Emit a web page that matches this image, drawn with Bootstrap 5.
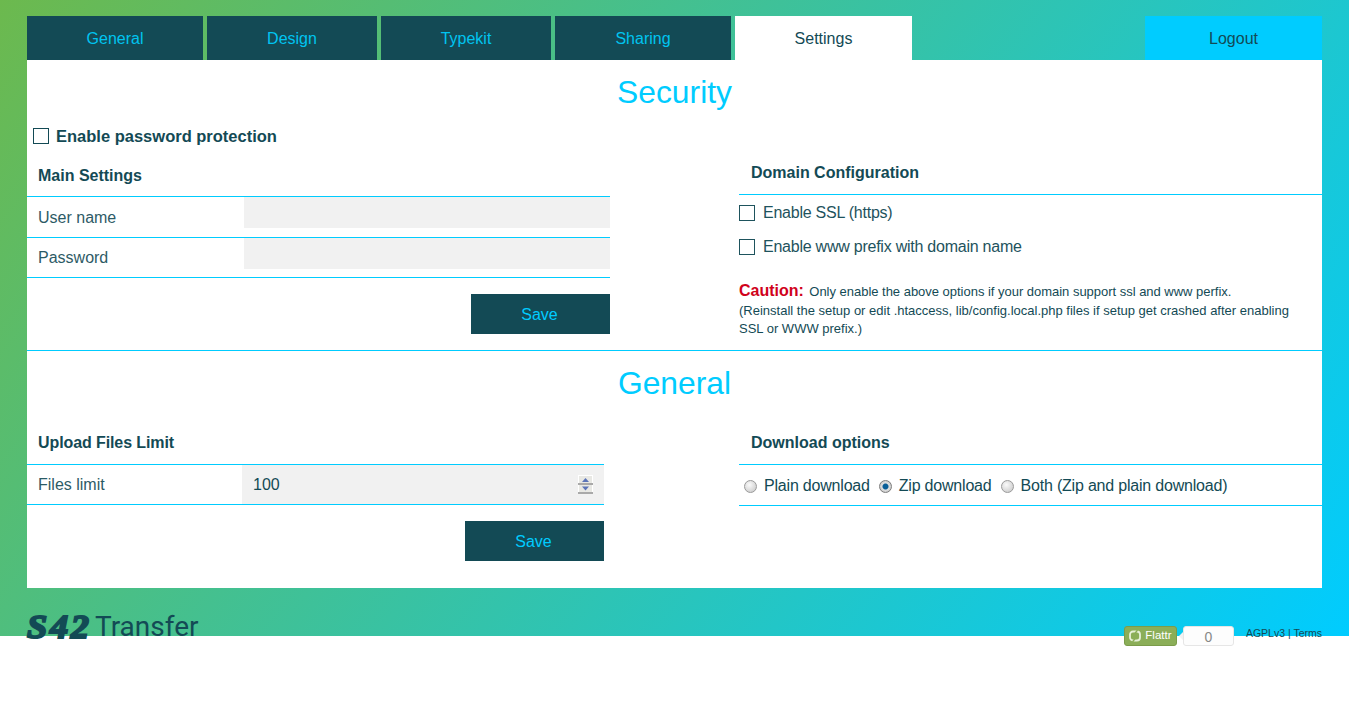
<!DOCTYPE html>
<html lang="en">
<head>
    <meta charset="UTF-8">
    <title>S42 Transfer - Settings</title>
    <meta name="viewport" content="width=device-width, initial-scale=1">
    <link href="https://cdn.jsdelivr.net/npm/bootstrap@5.3.3/dist/css/bootstrap.min.css" rel="stylesheet">
    <style>
        html, body { height: 705px; overflow: hidden; }
        body { font-family: "Liberation Sans", Arial, sans-serif; font-size: 16px; color: #134a55; background: #fff; }
        .bg-wrap { height: 636px; padding: 16px 27px 0; background: linear-gradient(128deg, #6cb94e 0%, #00ccff 100%); }

        /* tabs */
        .tab-bar { gap: 4px; height: 44px; }
        .tab-link { display: block; height: 44px; line-height: 45px; text-align: center; background: #134a55; color: #00c4f0; text-decoration: none; }
        .tab-link.active { background: #fff; color: #134a55; }
        .tab-link.logout { margin-left: auto; background: #00ccff; color: #134a55; }
        .w-176 { width: 176px; }
        .w-170 { width: 170px; }
        .w-177 { width: 177px; }

        .panel { height: 528px; background: #fff; }
        .sec-title { height: 64px; line-height: 64px; margin: 0; text-align: center; font-size: 31.8px; font-weight: 400; color: #00ccff; }
        .sec-security { height: 291px; border-bottom: 1px solid #00ccff; }
        .col-box { width: 583px; }
        .col-box.narrow { width: 577px; }

        .pw-toggle { height: 24px; padding-left: 6px; gap: 7px; font-size: 16.5px; font-weight: 700; }
        .box-head { font-size: 16px; line-height: 24px; font-weight: 700; padding-left: 11px; border-bottom: 1px solid #00ccff; }
        .head-main { height: 49px; padding-top: 16px; }
        .head-domain { height: 71px; padding-top: 37px; padding-left: 12px; }
        .head-upload { height: 50px; padding-top: 16px; letter-spacing: -.1px; }
        .head-download { height: 50px; padding-top: 16px; padding-left: 12px; }

        .set-row { height: 40px; border-bottom: 1px solid #00ccff; }
        .set-row.first-row { height: 41px; }
        .set-label { width: 217px; padding: 8px 0 0 11px; flex: none; opacity: .9; }
        .first-row .set-label { padding-top: 9px; }
        .set-input { flex: 1; height: 31px; border: 0; background: #f1f1f1; padding: 0; outline: 0; }
        .files-label { width: 215px; }
        .files-wrap { flex: 1; height: 39px; background: #f1f1f1; padding-left: 11px; position: relative; }
        .files-input { width: 300px; height: 39px; border: 0; background: transparent; padding: 0; color: #134a55; outline: 0; }
        .spin-icon { position: absolute; right: 11px; top: 10px; display: block; }

        .save-btn { width: 139px; height: 40px; border: 0; border-radius: 0; background: #134a55; color: #00ccff; font-size: 16px; padding: 2px 2px 0 0; }
        .save-btn:hover { background: #134a55; color: #00ccff; }

        .tick-box { appearance: none; width: 16px; height: 16px; border: 1px solid #134a55; background: #fff; margin: 0; flex: none; border-radius: 0; }
        .tick-list { margin-top: 1px; }
        .tick-row { height: 34px; gap: 8px; opacity: .95; letter-spacing: -.24px; }
        .caution-txt { font-size: 13px; line-height: 18px; margin-top: 18px; padding-right: 20px; }
        .caution-line { padding-bottom: 1px; letter-spacing: -.02px; }
        .caution-txt b { font-size: 16px; color: #d0021b; margin-right: 2px; }

        .dl-row { height: 41px; padding: 2px 0 0 5px; border-bottom: 1px solid #00ccff; letter-spacing: -.2px; }
        .dl-radio { appearance: none; width: 13px; height: 13px; margin: 0 7px 0 0; border-radius: 50%; border: 1px solid #9a9a9a; background: radial-gradient(circle at 40% 35%, #fafafa, #c4c4c4); flex: none; }
        .dl-radio:checked { background: radial-gradient(circle, #0a5f98 0 2.5px, #e0e0e0 3.5px, #b8b8b8 100%); border-color: #7d7d7d; }
        .dl-label { margin-right: 9px; }

        /* footer */
        .foot-bar { padding-top: 24px; height: 48px; }
        .logo-s42 { display: inline-block; width: 64px; transform: scaleX(1.1); transform-origin: left center; font-family: "Liberation Serif", serif; font-style: italic; font-weight: 700; font-size: 33px; line-height: 30px; letter-spacing: 2.5px; -webkit-text-stroke: 2px #134a55; color: #134a55; white-space: nowrap; }
        .logo-name { font-family: "Roboto", "Liberation Sans", sans-serif; font-weight: 400; font-size: 28px; line-height: 30px; margin-left: 4px; color: #134a55; }
        .flattr-btn { width: 53px; height: 20px; margin-top: 14px; background: #8bae58; border: 1px solid #7b9c4a; border-radius: 3px; color: #fff; font-size: 11.5px; gap: 4px; }
        .flattr-count { width: 51px; height: 20px; margin: 14px 0 0 6px; background: #fdfdfd; border: 1px solid #e6e6e6; border-radius: 3px; color: #888; font-size: 14px; line-height: 20px; text-align: center; position: relative; }
        .flattr-count::before { content: ""; position: absolute; left: -5px; top: 5px; border: 4px solid transparent; border-left: 0; border-right: 4px solid #f2f2f2; }
        .foot-links { margin: 14px 0 0 12px; font-size: 10.5px; line-height: 14px; }
    </style>
</head>
<body>

<div class="bg-wrap">
    <!-- Tabs -->
    <ul class="nav tab-bar">
        <li class="w-176"><a class="tab-link" href="#">General</a></li>
        <li class="w-170"><a class="tab-link" href="#">Design</a></li>
        <li class="w-170"><a class="tab-link" href="#">Typekit</a></li>
        <li class="w-176"><a class="tab-link" href="#">Sharing</a></li>
        <li class="w-177"><a class="tab-link active" href="#">Settings</a></li>
        <li class="w-177 ms-auto"><a class="tab-link logout" href="#">Logout</a></li>
    </ul>

    <div class="panel">
        <!-- Security -->
        <div class="sec-security">
            <h2 class="sec-title">Security</h2>
            <div class="d-flex justify-content-between">
                <div class="col-box">
                    <label class="pw-toggle d-flex align-items-center">
                        <input type="checkbox" class="tick-box">
                        <span>Enable password protection</span>
                    </label>
                    <div class="box-head head-main">Main Settings</div>
                    <div class="set-row first-row d-flex">
                        <span class="set-label">User name</span>
                        <input type="text" class="set-input">
                    </div>
                    <div class="set-row d-flex">
                        <span class="set-label">Password</span>
                        <input type="password" class="set-input">
                    </div>
                    <div class="d-flex justify-content-end mt-3">
                        <button class="btn save-btn">Save</button>
                    </div>
                </div>
                <div class="col-box">
                    <div class="box-head head-domain">Domain Configuration</div>
                    <div class="tick-list">
                        <label class="tick-row d-flex align-items-center"><input type="checkbox" class="tick-box"><span>Enable SSL (https)</span></label>
                        <label class="tick-row d-flex align-items-center"><input type="checkbox" class="tick-box"><span>Enable www prefix with domain name</span></label>
                    </div>
                    <div class="caution-txt">
                        <div class="caution-line"><b>Caution:</b> Only enable the above options if your domain support ssl and www perfix.</div>
                        <div>(Reinstall the setup or edit .htaccess, lib/config.local.php files if setup get crashed after enabling SSL or WWW prefix.)</div>
                    </div>
                </div>
            </div>
        </div>

        <!-- General -->
        <h2 class="sec-title">General</h2>
        <div class="d-flex justify-content-between">
            <div class="col-box narrow">
                <div class="box-head head-upload">Upload Files Limit</div>
                <div class="set-row d-flex">
                    <span class="set-label files-label">Files limit</span>
                    <div class="files-wrap">
                        <input type="text" class="files-input" value="100">
                        <svg class="spin-icon" width="15" height="19" viewBox="0 0 15 19">
                            <rect x="0" y="0" width="15" height="19" fill="#fff"/>
                            <rect x="1" y="1" width="13" height="8" fill="#e8e8e4"/>
                            <rect x="1" y="10" width="13" height="8" fill="#e8e8e4"/>
                            <rect x="0" y="8" width="15" height="2" fill="#a9a9a9"/>
                            <rect x="0" y="17" width="15" height="2" fill="#a9a9a9"/>
                            <path d="M7.5 3 L11 7 H4 Z" fill="#5b74b8"/>
                            <path d="M4 11.5 H11 L7.5 15.5 Z" fill="#5b74b8"/>
                        </svg>
                    </div>
                </div>
                <div class="d-flex justify-content-end mt-3">
                    <button class="btn save-btn">Save</button>
                </div>
            </div>
            <div class="col-box">
                <div class="box-head head-download">Download options</div>
                <div class="dl-row d-flex align-items-center">
                    <input type="radio" name="dl" class="dl-radio"><span class="dl-label">Plain download</span>
                    <input type="radio" name="dl" class="dl-radio" checked><span class="dl-label">Zip download</span>
                    <input type="radio" name="dl" class="dl-radio"><span>Both (Zip and plain download)</span>
                </div>
            </div>
        </div>
    </div>

    <!-- Footer -->
    <div class="foot-bar d-flex">
        <span class="logo-s42">S42</span><span class="logo-name">Transfer</span>
        <a class="flattr-btn d-flex align-items-center justify-content-center ms-auto text-decoration-none" href="#">
            <svg width="12" height="12" viewBox="0 0 12 12"><rect x="1" y="1.5" width="10" height="9" rx="3" fill="none" stroke="#e6f0d8" stroke-width="1.8"/><path d="M8.5 0 L4 6 H8 L3.5 12" fill="none" stroke="#8bae58" stroke-width="1.4"/></svg>
            <span>Flattr</span>
        </a>
        <span class="flattr-count">0</span>
        <span class="foot-links">AGPLv3 | Terms</span>
    </div>
</div>

<script src="https://cdn.jsdelivr.net/npm/bootstrap@5.3.3/dist/js/bootstrap.bundle.min.js"></script>
</body>
</html>
